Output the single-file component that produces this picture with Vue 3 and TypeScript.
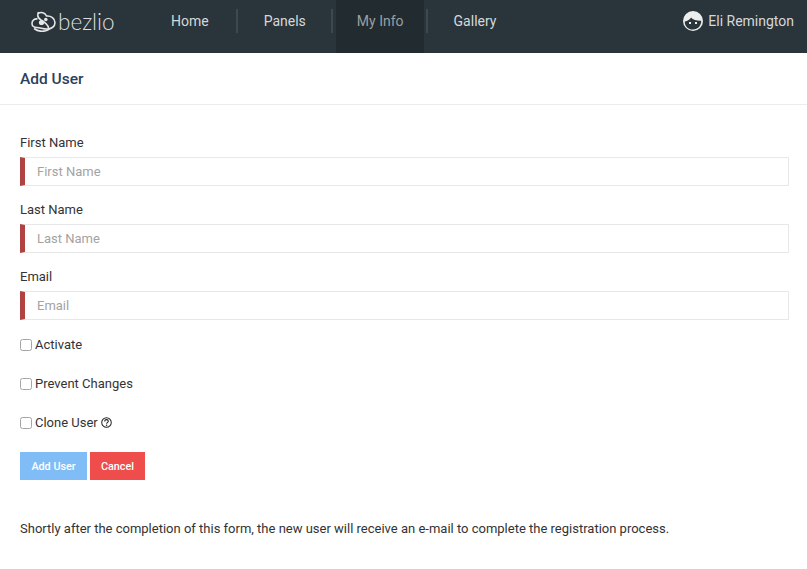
<script setup lang="ts">
const navItems = [
  { label: 'Home', active: false },
  { label: 'Panels', active: false },
  { label: 'My Info', active: true },
  { label: 'Gallery', active: false },
]
const fields = ['First Name', 'Last Name', 'Email']
</script>

<template>
  <div class="page">
    <header class="nav">
      <div class="brand">
        <svg class="logo" viewBox="0 0 25 21" width="25" height="21" fill="none" stroke="#e4e6e7" stroke-width="1.6">
          <path d="M7.500 1 C6 4 7 7 10 9 C13.500 11 17 13 17.500 17" />
          <path d="M7 2.500 C10 .5 14 1.500 15.500 5 C20 4.500 24 7.500 24 11.500 C24 15.500 20.500 18 16 18 C12 18 9 16.500 6 16.500 C3 16.500 1 15 1 12.500 C1 9.500 3.500 7.500 6.500 8" />
          <path d="M3 17.500 C8 21 14 20.800 18.500 18" />
          <circle cx="10.500" cy="11.500" r="2.600" fill="#e4e6e7" stroke="none" />
          <circle cx="14.800" cy="8.500" r="1.800" fill="#e4e6e7" stroke="none" />
        </svg>
        <span class="brand-name">bezlio</span>
      </div>
      <nav class="menu">
        <a v-for="item in navItems" :key="item.label" class="menu-item" :class="{ active: item.active }">{{ item.label }}</a>
      </nav>
      <div class="user">
        <svg viewBox="0 0 20 20" width="20" height="20">
          <circle cx="10" cy="10" r="10" fill="#eceeee" />
          <path d="M1.800 10.500 C4.500 10 7 8.500 8 6.500 C10 8.800 14 10 18.200 9.800 C18.400 14.500 15 18.600 10 18.600 C5 18.600 1.600 15 1.800 10.500 Z" fill="#2a343b" />
          <rect x="6" y="11" width="2" height="2" fill="#eceeee" />
          <rect x="12" y="11" width="2" height="2" fill="#eceeee" />
        </svg>
        <span>Eli Remington</span>
      </div>
    </header>

    <div class="title-bar"><h1>Add User</h1></div>

    <form class="form" @submit.prevent>
      <div v-for="field in fields" :key="field" class="field">
        <label class="label">{{ field }}</label>
        <input class="input" type="text" :placeholder="field" />
      </div>

      <label class="check"><input type="checkbox" /><span>Activate</span></label>
      <label class="check"><input type="checkbox" /><span>Prevent Changes</span></label>
      <label class="check">
        <input type="checkbox" /><span>Clone User</span>
        <svg class="help" viewBox="0 0 12 12" width="11" height="11">
          <circle cx="6" cy="6" r="5.200" fill="none" stroke="#222" stroke-width="1.100" />
          <path d="M4 4.800 C4 3.500 5 2.900 6 2.900 C7.200 2.900 8 3.600 8 4.600 C8 5.900 6.100 5.800 6.100 7.400" fill="none" stroke="#222" stroke-width="1.200" />
          <circle cx="6.100" cy="9" r=".8" fill="#222" />
        </svg>
      </label>

      <div class="actions">
        <button type="button" class="btn add">Add User</button>
        <button type="button" class="btn cancel">Cancel</button>
      </div>

      <p class="note">Shortly after the completion of this form, the new user will receive an e-mail to complete the registration process.</p>
    </form>
  </div>
</template>

<style>
html, body { margin: 0; background: #fff; }
</style>

<style scoped>
.page {
  width: 807px;
  height: 569px;
  overflow: hidden;
  font-family: Roboto, "Liberation Sans", sans-serif;
  color: #333;
  font-size: 13px;
}
.nav {
  height: 53px;
  background: #2a343b;
  display: flex;
  align-items: stretch;
  box-sizing: border-box;
}
.brand {
  width: 150px;
  display: flex;
  align-items: center;
  gap: 2px;
  padding: 0 0 11px 31px;
  box-sizing: border-box;
}
.logo { flex: none; }
.brand-name {
  font-family: Lato, sans-serif;
  font-weight: 300;
  font-size: 22.500px;
  color: #dcdfe0;
}
.menu { display: flex; flex: 1; }
.menu-item {
  height: 53px;
  padding: 0 21px 11px;
  box-sizing: border-box;
  display: flex;
  align-items: center;
  font-size: 14px;
  color: #d5d8d9;
  position: relative;
}
.menu-item::before {
  content: "";
  position: absolute;
  left: -7px;
  top: 9px;
  width: 2px;
  height: 24px;
  background: #3e484e;
}
.menu-item:first-child::before { display: none; }
.menu-item:nth-child(2) { margin-left: 13px; }
.menu-item:nth-child(3) { margin-left: 9px; }
.menu-item:nth-child(4) { margin-left: 9px; }
.menu-item:nth-child(3)::before { left: -5px; }
.menu-item.active { background: #222b30; color: #9a9fa2; padding-right: 20px; }
.user {
  display: flex;
  align-items: center;
  gap: 5px;
  padding: 0 13px 11px 0;
  font-size: 14px;
  color: #d5d8d9;
}
.title-bar {
  height: 51px;
  border-bottom: 1px solid #ececec;
  display: flex;
  align-items: center;
  padding-left: 20px;
}
h1 {
  margin: 0;
  font-size: 15.500px;
  font-weight: 500;
  color: #2d4059;
}
.form { padding: 30px 18px 0 20px; }
.field { margin-bottom: 16px; }
.label { display: block; height: 22px; line-height: 16px; font-size: 13px; color: #333; }
.input {
  display: block;
  width: 100%;
  height: 29px;
  box-sizing: border-box;
  border: 1px solid #e8e8e8;
  border-left: 5px solid #b04242;
  padding: 0 12px;
  outline: none;
  font: 13px Roboto, sans-serif;
  color: #333;
}
.input::placeholder { color: #a3a3a3; opacity: 1; }
.check {
  display: flex;
  align-items: center;
  height: 16px;
  margin-bottom: 23px;
  font-size: 13px;
}
.check input {
  appearance: none;
  box-sizing: border-box;
  width: 12px;
  height: 12px;
  margin: 1px 3px 0 0;
  background: #fff;
  border: 1px solid #a5a5a5;
  border-radius: 2.500px;
}
.help { margin-left: 3px; }
.actions { display: flex; gap: 3px; margin-top: -1px; }
.btn {
  height: 28px;
  border: 0;
  padding: 0;
  color: #fff;
  font: 500 10.800px Roboto, sans-serif;
}
.add { width: 67px; background: #80bdf7; }
.cancel { width: 55px; background: #ef4c4c; }
.note { margin: 41px 0 0; font-size: 13px; line-height: 16px; }
</style>
